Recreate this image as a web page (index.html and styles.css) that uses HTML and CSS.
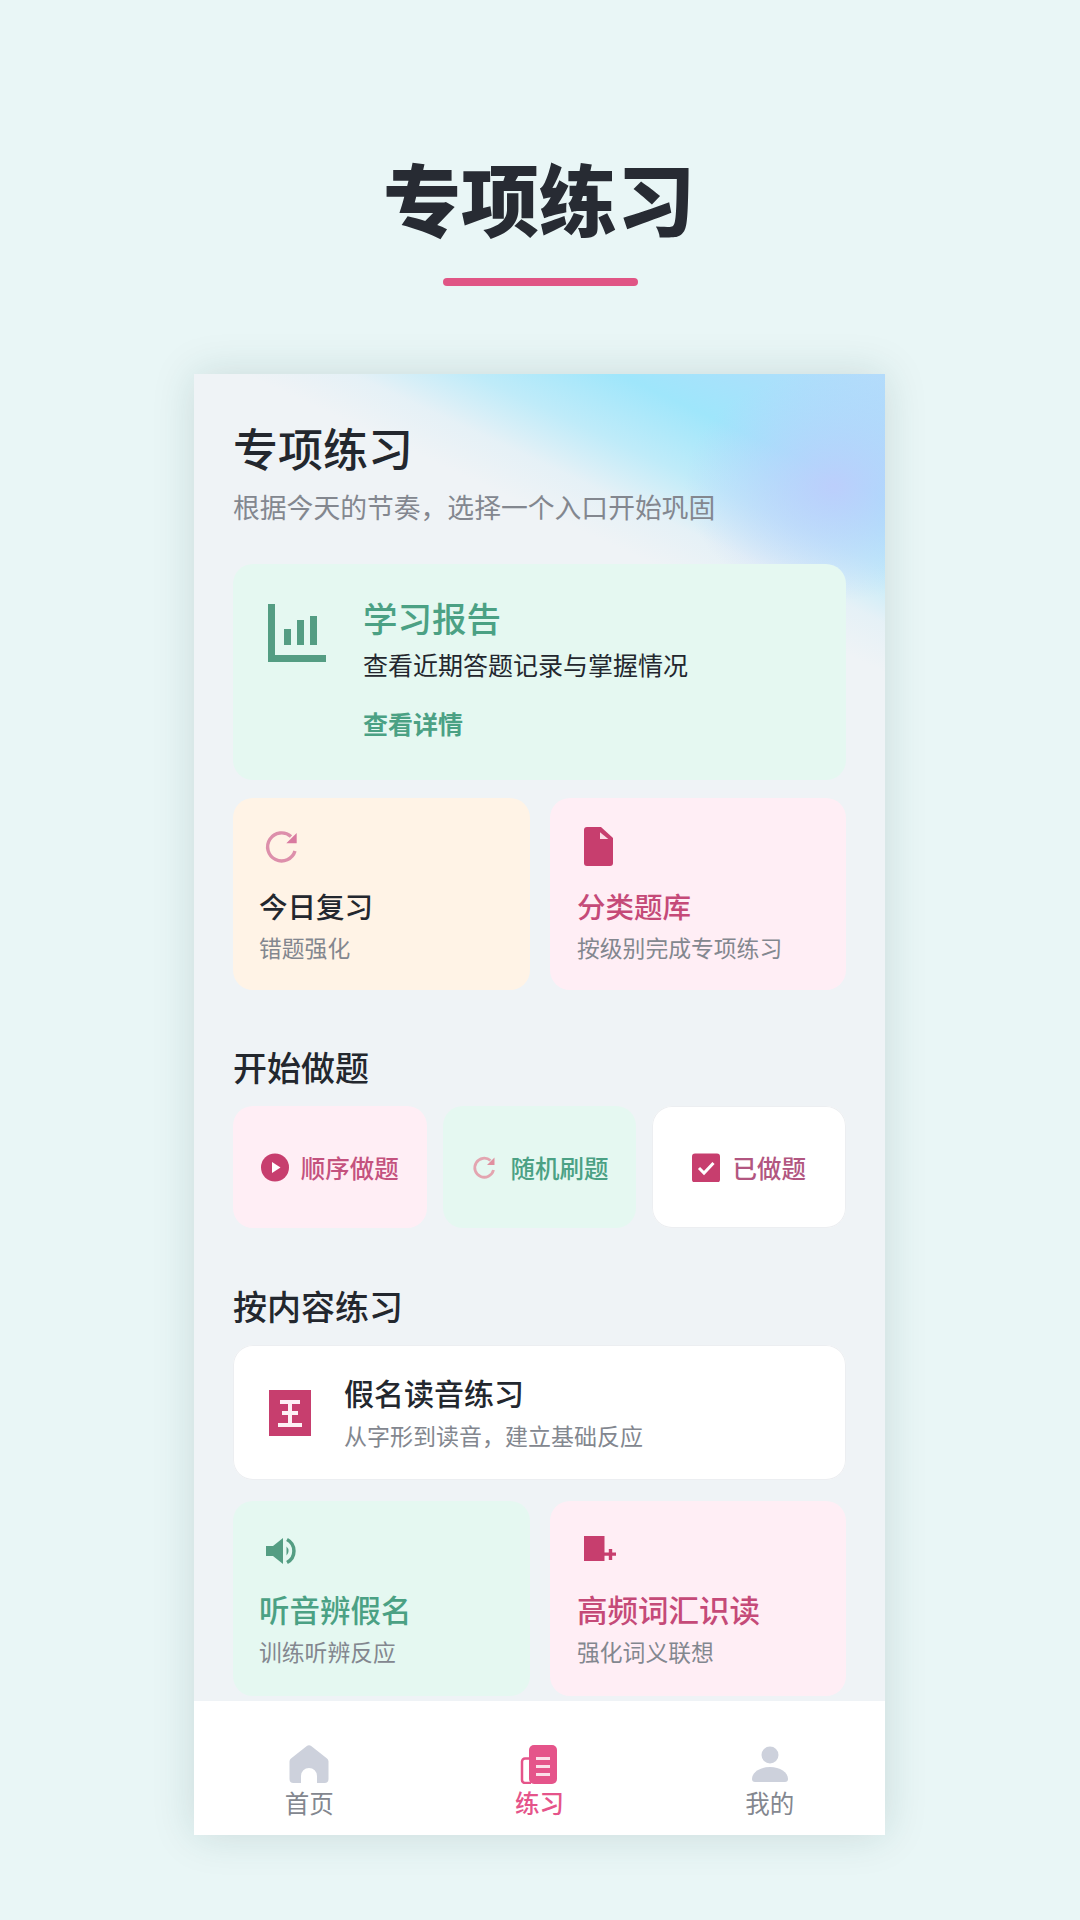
FILE: index.html
```html
<!DOCTYPE html>
<html lang="zh-CN">
<head>
<meta charset="utf-8">
<title>专项练习</title>
<link rel="stylesheet" href="styles.css">
</head>
<body>
<header class="poster-head">
  <h1 class="poster-title">专项练习</h1>
  <div class="poster-rule"></div>
</header>
<main class="phone">
  <div class="content">
    <h2 class="page-title">专项练习</h2>
    <p class="page-sub">根据今天的节奏，选择一个入口开始巩固</p>

    <section class="report">
      <svg class="report-icon" viewBox="0 0 58 58"><path fill="#549d83" d="M0 0h7v51h51v7H0z"/><path fill="#549d83" d="M16 25h7v16h-7zM29 16h7v25h-7zM42 12h7v29h-7z"/></svg>
      <div>
        <div class="report-title">学习报告</div>
        <div class="report-desc">查看近期答题记录与掌握情况</div>
        <div class="report-link">查看详情</div>
      </div>
    </section>

    <div class="pair pair-top">
      <article class="tile tile-orange">
        <svg class="tile-icon" viewBox="0 0 44 40"><path fill="none" stroke="#dd8fab" stroke-width="3.4" d="M32 9.500A14 14 0 1 0 36 24"/><path fill="#d97aa0" d="M37.700 6v10.300H27.300z"/></svg>
        <div class="tile-title">今日复习</div>
        <div class="tile-sub">错题强化</div>
      </article>
      <article class="tile tile-pink">
        <svg class="tile-icon" viewBox="0 0 44 40"><path fill="#c73e6e" d="M10 0h14l12 11v25a3 3 0 0 1-3 3H10a3 3 0 0 1-3-3V3a3 3 0 0 1 3-3z"/><path fill="#fbdbe6" d="M23 5.300V12h8.300z"/></svg>
        <div class="tile-title text-pink">分类题库</div>
        <div class="tile-sub">按级别完成专项练习</div>
      </article>
    </div>

    <h3 class="section-title section-first">开始做题</h3>
    <div class="actions">
      <button class="action action-pink">
        <svg class="action-icon" viewBox="0 0 28 28"><circle cx="14" cy="14" r="14" fill="#c73e6e"/><path fill="#fff" d="M11 8.500l8.500 5.500-8.500 5.500z"/></svg>
        <span>顺序做题</span>
      </button>
      <button class="action action-green">
        <svg class="action-icon" viewBox="0 0 28 28"><path fill="none" stroke="#e3a5b0" stroke-width="2.800" d="M20.500 7A9.500 9.500 0 1 0 23.500 16.500"/><path fill="#e0909f" d="M24.500 4v7.500h-7.500z"/></svg>
        <span>随机刷题</span>
      </button>
      <button class="action action-white">
        <svg class="action-icon" viewBox="0 0 28 28"><rect width="28" height="29" rx="3" fill="#c73e6e"/><path fill="none" stroke="#fff" stroke-width="3" d="M7 14.500l5 5 9.500-10"/></svg>
        <span>已做题</span>
      </button>
    </div>

    <h3 class="section-title section-second">按内容练习</h3>
    <article class="row-card">
      <svg class="row-icon" viewBox="0 0 42 46"><rect width="42" height="46" fill="#c73e6e"/><path fill="#fdf0f4" d="M11 10h20v4H11zM13 21h16v4H13zM9 33h24v4H9zM19 10h4v26h-4z"/></svg>
      <div class="row-text">
        <div class="row-title">假名读音练习</div>
        <div class="row-sub">从字形到读音，建立基础反应</div>
      </div>
    </article>

    <div class="pair pair-bottom">
      <article class="tile tile-green">
        <svg class="tile-icon" viewBox="0 0 44 40"><path fill="#549d83" d="M7 15h7l10-8v26l-10-8H7z"/><path fill="none" stroke="#549d83" stroke-width="3.500" d="M28 8.500a13 13 0 0 1 0 23"/><path fill="#549d83" d="M27.500 15.500a6 6 0 0 1 0 9z"/></svg>
        <div class="tile-title large text-green">听音辨假名</div>
        <div class="tile-sub">训练听辨反应</div>
      </article>
      <article class="tile tile-pink">
        <svg class="tile-icon" viewBox="0 0 44 40"><path fill="#c73e6e" d="M7 5h20.500v25H7zM31.800 18h3.400v3.400h3.800v3.400h-3.800v4.200h-3.400v-4.200H27v-3.400h4.800z"/></svg>
        <div class="tile-title large text-pink">高频词汇识读</div>
        <div class="tile-sub">强化词义联想</div>
      </article>
    </div>
  </div>

  <nav class="tabbar">
    <div class="tab">
      <svg class="tab-icon" viewBox="0 0 40 39"><path fill="#cdd1dc" fill-rule="evenodd" d="M17.500 1.200a4 4 0 0 1 5 0L38 13.500a4 4 0 0 1 1.500 3V34a4 4 0 0 1-4 4H28V31a8 8 0 0 0-16 0v7H4.500a4 4 0 0 1-4-4V16.500a4 4 0 0 1 1.500-3z"/></svg>
      <span class="tab-label">首页</span>
    </div>
    <div class="tab">
      <svg class="tab-icon" viewBox="0 0 40 39"><rect x="10" width="28" height="39" rx="5" fill="#e5548a"/><path fill="none" stroke="#e5548a" stroke-width="2.500" d="M10 13.500H6a3 3 0 0 0-3 3V35a3 3 0 0 0 3 3h6"/><path fill="#fbdfe9" d="M17 12h14v3H17zM17 20h14v3H17zM17 28h14v3H17z"/></svg>
      <span class="tab-label tab-active">练习</span>
    </div>
    <div class="tab">
      <svg class="tab-icon" viewBox="0 0 40 39"><circle cx="20" cy="10" r="8.500" fill="#cdd1dc"/><path fill="#cdd1dc" d="M2 34c0-7 8-12 18-12s18 5 18 12a3 3 0 0 1-3 3H5a3 3 0 0 1-3-3z"/></svg>
      <span class="tab-label">我的</span>
    </div>
  </nav>
</main>
</body>
</html>
```

FILE: styles.css
```css
* { box-sizing: border-box; }

html, body { margin: 0; padding: 0; }

body {
  width: 1080px;
  height: 1920px;
  overflow: hidden;
  background: #e9f6f6;
  color: #23272e;
  font-family: "Noto Sans CJK SC", "Noto Sans", sans-serif;
}

.poster-head {
  display: flex;
  flex-direction: column;
  align-items: center;
  padding-top: 151.500px;
}

.poster-title {
  margin: 0;
  padding-right: 2px;
  font-size: 78px;
  line-height: 90px;
  font-weight: 900;
  color: #272b33;
}

.poster-rule {
  width: 195px;
  height: 8px;
  margin-top: 36.500px;
  border-radius: 4px;
  background: #e05585;
}

.phone {
  display: flex;
  flex-direction: column;
  width: 691px;
  height: 1461px;
  margin: 88px 0 0 194px;
  overflow: hidden;
  background:
    radial-gradient(ellipse 150px 115px at 640px 112px, rgba(189, 205, 252, .95), rgba(189, 205, 252, 0)),
    linear-gradient(205deg, #b4dbfb 0%, #9fe6fb 20%, rgba(159, 230, 251, .6) 31%, rgba(190, 232, 248, .2) 40%, rgba(190, 232, 248, 0) 48%) 0 0 / 691px 300px no-repeat,
    #eff3f6;
  box-shadow: 0 0 40px rgba(20, 70, 70, .15);
}

.content {
  flex: 1;
  min-height: 0;
  padding: 47px 39px 0;
}

.page-title {
  margin: 0;
  font-size: 45px;
  line-height: 54px;
  font-weight: 500;
}

.page-sub {
  margin: 13.500px 0 0;
  font-size: 26.800px;
  line-height: 36px;
  color: #83878f;
  white-space: nowrap;
}

.report {
  display: flex;
  gap: 37px;
  height: 216px;
  margin-top: 39.500px;
  padding: 31px 35px 0;
  border-radius: 20px;
  background: #e5f8f1;
}

.report-icon {
  flex: none;
  width: 58px;
  height: 58px;
  margin-top: 9px;
}

.report-title {
  font-size: 34.500px;
  line-height: 44px;
  font-weight: 500;
  color: #4ba184;
}

.report-desc {
  margin-top: 8px;
  font-size: 25px;
  line-height: 34px;
}

.report-link {
  margin-top: 25px;
  font-size: 25px;
  line-height: 34px;
  font-weight: 700;
  color: #4ba184;
}

.pair {
  display: grid;
  grid-template-columns: 297px 296px;
  gap: 20px;
}

.pair-top { margin-top: 18px; }
.pair-bottom { margin-top: 21px; }

.tile {
  height: 192px;
  padding: 29px 26px 0;
  border-radius: 20px;
}

.pair-bottom .tile {
  height: 195px;
  padding-top: 30px;
}

.tile-pink { padding-left: 27px; }

.tile-orange { background: #fff3e6; }
.tile-pink { background: #ffeef5; }
.tile-green { background: #e5f8f1; }

.tile-icon {
  display: block;
  width: 44px;
  height: 40px;
}

.tile-title {
  margin-top: 18.500px;
  font-size: 28.500px;
  line-height: 40px;
  font-weight: 500;
  white-space: nowrap;
}

.tile-title.large {
  margin-top: 17.500px;
  font-size: 30.500px;
}

.text-pink { color: #c54a78; }
.text-green { color: #4ba184; }

.tile-sub {
  margin-top: 7.500px;
  font-size: 22.800px;
  line-height: 30px;
  color: #83878f;
  white-space: nowrap;
}

.tile-title.large + .tile-sub { margin-top: 8.500px; }

.section-title {
  margin: 0;
  font-size: 34px;
  line-height: 40px;
  font-weight: 500;
}

.section-first { margin-top: 57px; }
.section-second { margin-top: 57.500px; }

.actions {
  display: grid;
  grid-template-columns: repeat(3, 1fr);
  gap: 16px;
  margin-top: 19px;
}

.action {
  display: flex;
  align-items: center;
  justify-content: center;
  gap: 12px;
  height: 122px;
  padding: 0;
  border: 0;
  border-radius: 20px;
  font-family: inherit;
  font-size: 24.500px;
  font-weight: 500;
}

.action-pink { background: #ffeef5; color: #c4527e; }
.action-green { background: #e5f8f1; color: #4ba184; }
.action-white { background: #fff; color: #b25680; box-shadow: inset 0 0 0 1px #eceef1; }

.action-icon {
  flex: none;
  width: 28px;
  height: 29px;
}

.row-card {
  display: flex;
  align-items: center;
  gap: 33px;
  height: 135px;
  margin-top: 19.500px;
  padding-left: 36px;
  border-radius: 20px;
  background: #fff;
  box-shadow: inset 0 0 0 1px #eceef1;
}

.row-icon {
  flex: none;
  width: 42px;
  height: 46px;
}

.row-text { padding-bottom: 3.500px; }

.row-title {
  font-size: 30px;
  line-height: 40px;
  font-weight: 500;
}

.row-sub {
  margin-top: 7.500px;
  font-size: 23px;
  line-height: 30px;
  color: #83878f;
}

.tabbar {
  display: grid;
  grid-template-columns: repeat(3, 1fr);
  flex: none;
  height: 134px;
  padding-top: 44px;
  background: #fff;
}

.tab {
  display: flex;
  flex-direction: column;
  align-items: center;
}

.tab-icon {
  width: 40px;
  height: 39px;
}

.tab-label {
  margin-top: 4px;
  font-size: 24.500px;
  line-height: 30px;
  color: #83878f;
}

.tab-active {
  color: #e5548a;
  font-weight: 500;
}
```
